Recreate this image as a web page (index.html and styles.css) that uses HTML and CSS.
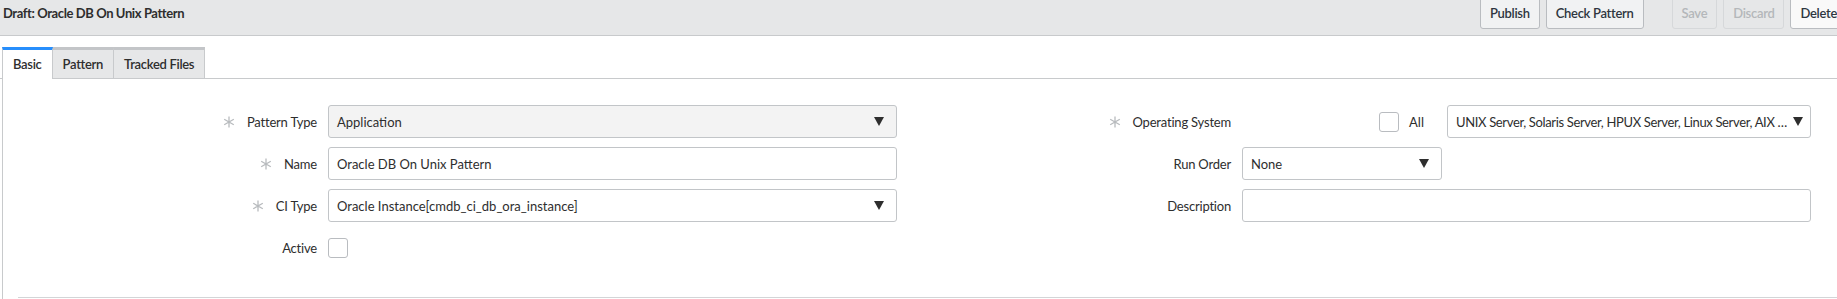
FILE: index.html
```html
<!DOCTYPE html>
<html lang="en">
<head>
    <meta charset="UTF-8">
    <title>Draft: Oracle DB On Unix Pattern</title>
    <link rel="stylesheet" href="styles.css">
</head>
<body>
    <header class="topbar">
        <div class="title">Draft: Oracle DB On Unix Pattern</div>
        <div class="actions">
            <button class="btn">Publish</button>
            <button class="btn">Check Pattern</button>
            <button class="btn disabled save">Save</button>
            <button class="btn disabled">Discard</button>
            <button class="btn light">Delete</button>
        </div>
    </header>

    <nav class="tabs">
        <div class="tab active">Basic</div>
        <div class="tab">Pattern</div>
        <div class="tab">Tracked Files</div>
    </nav>

    <div class="panel">
        <div class="form">
            <div class="col">
                <div class="row">
                    <label class="lbl"><svg class="req" viewBox="0 0 12 12"><path d="M6 0.5V11.5M1.2 3.2L10.8 8.8M1.2 8.8L10.8 3.2"/></svg>Pattern Type</label>
                    <div class="field readonly"><span>Application</span><svg class="caret" viewBox="0 0 10 9"><path d="M0 0H10L5 9Z"/></svg></div>
                </div>
                <div class="row">
                    <label class="lbl"><svg class="req" viewBox="0 0 12 12"><path d="M6 0.5V11.5M1.2 3.2L10.8 8.8M1.2 8.8L10.8 3.2"/></svg>Name</label>
                    <div class="field"><span>Oracle DB On Unix Pattern</span></div>
                </div>
                <div class="row">
                    <label class="lbl"><svg class="req" viewBox="0 0 12 12"><path d="M6 0.5V11.5M1.2 3.2L10.8 8.8M1.2 8.8L10.8 3.2"/></svg>CI Type</label>
                    <div class="field"><span>Oracle Instance[cmdb_ci_db_ora_instance]</span><svg class="caret" viewBox="0 0 10 9"><path d="M0 0H10L5 9Z"/></svg></div>
                </div>
                <div class="row">
                    <label class="lbl">Active</label>
                    <div><span class="check"></span></div>
                </div>
            </div>
            <div class="col">
                <div class="row">
                    <label class="lbl"><svg class="req" viewBox="0 0 12 12"><path d="M6 0.5V11.5M1.2 3.2L10.8 8.8M1.2 8.8L10.8 3.2"/></svg>Operating System</label>
                    <div class="os">
                        <span class="check"></span>
                        <span class="all">All</span>
                        <div class="field os-select"><span class="clip">UNIX Server, Solaris Server, HPUX Server, Linux Server, AIX …</span><svg class="caret" viewBox="0 0 10 9"><path d="M0 0H10L5 9Z"/></svg></div>
                    </div>
                </div>
                <div class="row">
                    <label class="lbl">Run Order</label>
                    <div class="field run-order"><span>None</span><svg class="caret" viewBox="0 0 10 9"><path d="M0 0H10L5 9Z"/></svg></div>
                </div>
                <div class="row">
                    <label class="lbl">Description</label>
                    <div class="field"></div>
                </div>
            </div>
        </div>
        <div class="form-end"></div>
    </div>
</body>
</html>
```

FILE: styles.css
```css
body {
    margin: 0;
    font-family: Lato, 'Liberation Sans', sans-serif;
    font-size: 13px;
    color: #2e2e2e;
    background: white;
    overflow: hidden;
}
.topbar {
    display: flex;
    align-items: flex-start;
    height: 35px;
    padding-left: 3px;
    background: #e6e7e8;
    border-bottom: 1px solid #c8cacc;
    overflow: hidden;
}
.title {
    flex: 1;
    font-weight: 700;
    letter-spacing: -0.4px;
    line-height: 27px;
}
.actions {
    display: flex;
    gap: 6px;
    margin-top: -3px;
    margin-right: -10px;
}
.btn {
    height: 32px;
    padding: 0 9px;
    font-family: inherit;
    font-size: 13px;
    font-weight: 600;
    letter-spacing: -0.3px;
    color: #2e3640;
    background: #f1f2f3;
    border: 1px solid #b9bcc0;
    border-radius: 3px;
}
.btn.disabled {
    color: #b4b7ba;
    background: #e6e7e8;
    border-color: #d6d8da;
}
.btn.save {
    margin-left: 22px;
}
.btn.light {
    background: #f9f9f9;
}
.tabs {
    display: flex;
    margin-top: 11px;
    padding-left: 2px;
    border-bottom: 1px solid #c8cacc;
}
.tab {
    height: 28px;
    line-height: 28px;
    padding: 0 10px;
    font-weight: 600;
    letter-spacing: -0.3px;
    background: #e6e7e8;
    border-top: 3px solid #c3c5c8;
    border-right: 1px solid #c8cacc;
}
.tab.active {
    background: white;
    border-top-color: #278efc;
    border-left: 1px solid #c8cacc;
    margin-bottom: -1px;
    height: 29px;
}
.panel {
    margin-left: 2px;
    padding-top: 26px;
    height: 220px;
    border-left: 1px solid #c8cacc;
}
.form {
    display: grid;
    grid-template-columns: 914px 914px;
}
.col {
    display: flex;
    flex-direction: column;
    gap: 9px;
}
.row {
    display: grid;
    grid-template-columns: 314px 569px;
    column-gap: 11px;
    align-items: center;
    height: 33px;
}
.lbl {
    display: flex;
    justify-content: flex-end;
    align-items: center;
    gap: 12px;
    letter-spacing: -0.2px;
}
.req {
    width: 12px;
    height: 12px;
    fill: none;
    stroke: #b8bbbe;
    stroke-width: 1.3;
}
.field {
    display: flex;
    align-items: center;
    justify-content: space-between;
    box-sizing: border-box;
    height: 33px;
    padding: 0 12px 0 8px;
    background: white;
    border: 1px solid #c2c5c8;
    border-radius: 3px;
    white-space: nowrap;
}
.field.readonly {
    background: #f3f3f3;
}
.caret {
    flex: none;
    width: 10px;
    height: 9px;
    fill: #2e2e2e;
}
.check {
    display: block;
    box-sizing: border-box;
    width: 20px;
    height: 20px;
    border: 1px solid #b9bcc0;
    border-radius: 3px;
}
.os {
    display: flex;
    justify-content: flex-end;
    align-items: center;
}
.all {
    margin: 0 23px 0 10px;
}
.os-select {
    width: 364px;
    padding-right: 7px;
}
.clip {
    overflow: hidden;
    text-overflow: ellipsis;
    letter-spacing: -0.35px;
    margin-right: 4px;
}
.run-order {
    width: 200px;
}
.form-end {
    margin: 33px 0 0 15px;
    border-top: 1px solid #d3d5d7;
}
```
